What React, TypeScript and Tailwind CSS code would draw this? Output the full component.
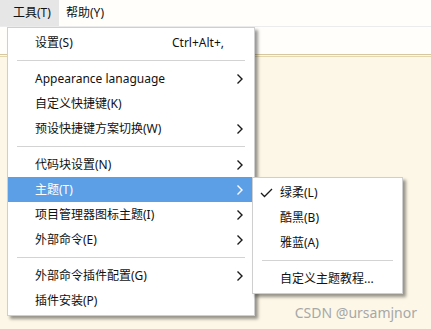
import { ReactNode } from "react";

const font = { fontFamily: '"Noto Sans", "Noto Sans CJK SC", sans-serif' };

type Entry =
    | { kind: "sep" }
    | { kind: "item"; label: string; shortcut?: string; sub?: boolean; active?: boolean; check?: boolean };

const mainItems: Entry[] = [
    { kind: "item", label: "设置(S)", shortcut: "Ctrl+Alt+," },
    { kind: "sep" },
    { kind: "item", label: "Appearance lanaguage", sub: true },
    { kind: "item", label: "自定义快捷键(K)" },
    { kind: "item", label: "预设快捷键方案切换(W)", sub: true },
    { kind: "sep" },
    { kind: "item", label: "代码块设置(N)", sub: true },
    { kind: "item", label: "主题(T)", sub: true, active: true },
    { kind: "item", label: "项目管理器图标主题(I)", sub: true },
    { kind: "item", label: "外部命令(E)", sub: true },
    { kind: "sep" },
    { kind: "item", label: "外部命令插件配置(G)", sub: true },
    { kind: "item", label: "插件安装(P)" },
];

const themeItems: Entry[] = [
    { kind: "item", label: "绿柔(L)", check: true },
    { kind: "item", label: "酷黑(B)" },
    { kind: "item", label: "雅蓝(A)" },
    { kind: "sep" },
    { kind: "item", label: "自定义主题教程..." },
];

const Chevron = ({ white }: { white?: boolean }) => (
    <svg width="8" height="12" viewBox="0 0 8 12" className="shrink-0">
        <path d="M1.5 1.5 L6 6 L1.5 10.5" fill="none" stroke={white ? "#ffffff" : "#1a1a1a"} strokeWidth="1.4" />
    </svg>
);

const Check = () => (
    <svg width="13" height="10" viewBox="0 0 13 10">
        <path d="M1 5 L4.5 8.5 L12 1" fill="none" stroke="#1a1a1a" strokeWidth="1.3" />
    </svg>
);

function MenuPanel({ items, className, left }: { items: Entry[]; className: string; left: number }): ReactNode {
    return (
        <div className={className}>
            {items.map((it, i) =>
                it.kind === "sep" ? (
                    <div key={i} className="my-[5px] mx-[9px] h-px bg-[#d3d3d3]" />
                ) : (
                    <div
                        key={i}
                        className={`h-[25px] flex items-center pr-[10px] text-[12px] ${it.active ? "bg-[#5d9fe6] text-white" : "text-[#111]"}`}
                    >
                        <div className="shrink-0 flex justify-center" style={{ width: left }}>
                            {it.check && <Check />}
                        </div>
                        <span className="flex-1 whitespace-nowrap">{it.label}</span>
                        {it.shortcut && <span className="mr-[20px] whitespace-nowrap">{it.shortcut}</span>}
                        {it.sub && <Chevron white={it.active} />}
                    </div>
                )
            )}
        </div>
    );
}

export default function App() {
    return (
        <div className="relative w-[431px] h-[329px] overflow-hidden bg-[#fdf7e7]" style={font}>
            <div className="h-[27px] flex items-stretch bg-[#fffefb] border-b border-[#ececec] text-[12px] text-[#111]">
                <div className="w-[59px] bg-[#e6e6e6] flex items-center pl-[13px]">工具(T)</div>
                <div className="flex items-center pl-[7px]">帮助(Y)</div>
            </div>
            <div className="h-[28px] bg-[#fffefb] border-b border-[#d6c89c]" />
            <div className="h-[2px] bg-[#fdf8ec] border-b border-[#e3d7b0]" />

            <div className="absolute right-[14px] top-[302px] text-[14px] text-[#a7a7a7]">CSDN @ursamjnor</div>

            <MenuPanel
                items={mainItems}
                left={27}
                className="absolute left-[7px] top-[27px] w-[248px] py-[2px] bg-white border border-[#cfcfcf] shadow-[3px_3px_3px_rgba(0,0,0,0.4)]"
            />
            <MenuPanel
                items={themeItems}
                left={27}
                className="absolute left-[252px] top-[177px] w-[151px] py-[2px] bg-white border border-[#cfcfcf] shadow-[3px_3px_3px_rgba(0,0,0,0.4)]"
            />
        </div>
    );
}
